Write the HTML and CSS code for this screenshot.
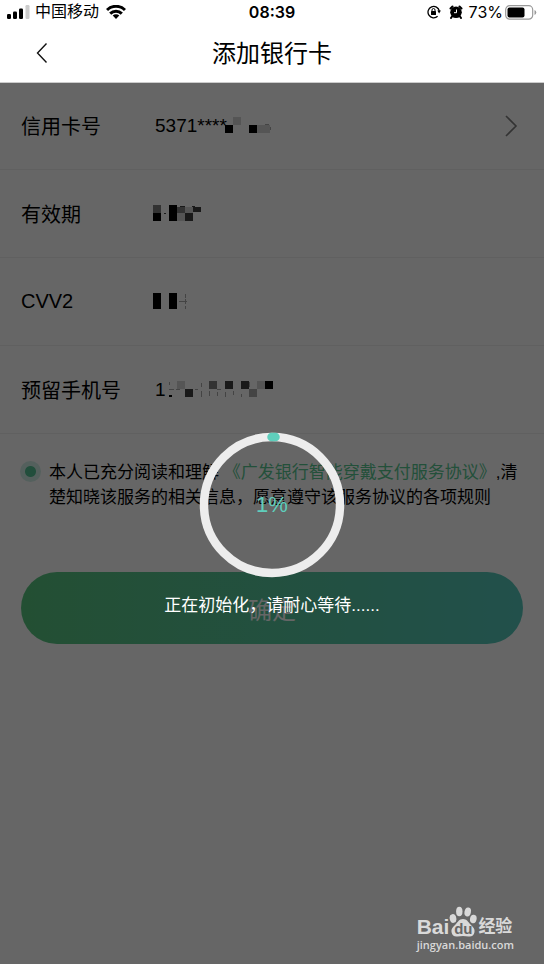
FILE: index.html
```html
<!DOCTYPE html>
<html lang="zh-CN">
<head>
<meta charset="utf-8">
<meta name="viewport" content="width=device-width, initial-scale=1">
<title>添加银行卡</title>
<link rel="stylesheet" href="styles.css">
</head>
<body>
<header class="top">
  <div class="status">
    <div class="status-side">
      <svg class="signal" width="23" height="14" viewBox="0 0 23 14" aria-hidden="true">
        <rect x="0" y="9" width="4" height="5" rx="1.2"/>
        <rect x="6" y="6.500" width="4" height="7.500" rx="1.2"/>
        <rect x="12" y="3.500" width="4" height="10.500" rx="1.2"/>
        <rect x="18.500" y="0" width="4" height="14" rx="1.2" fill="#ccc"/>
      </svg>
      <span class="carrier">中国移动</span>
      <svg width="20" height="14" viewBox="0 0 20 14" aria-hidden="true">
        <g fill="none" stroke="#000" stroke-width="3">
          <path d="M1 5a12.800 12.800 0 0 1 18 0"/>
          <path d="M4.200 8.600a8.200 8.200 0 0 1 11.600 0"/>
        </g>
        <path d="M10 13.900l-3.300-3.300a4.700 4.700 0 0 1 6.600 0z"/>
      </svg>
    </div>
    <time class="clock">08:39</time>
    <div class="status-side status-right">
      <svg width="14" height="14" viewBox="0 0 14 14" aria-hidden="true">
        <path d="M10.600 11.300A5.700 5.700 0 1 1 12.300 6" fill="none" stroke="#000" stroke-width="1.300"/>
        <path d="M10.300 5.500h3.600l-1.800 3z"/>
        <rect x="4" y="6" width="5" height="4" rx=".5"/>
        <path d="M5 6.200V5a1.500 1.500 0 0 1 3 0v1.200" fill="none" stroke="#000"/>
      </svg>
      <svg class="alarm" width="14" height="14" viewBox="0 0 14 14" aria-hidden="true">
        <circle cx="7" cy="7.300" r="5.800"/>
        <path d="M1.500 3.500L3.500 1.500M12.500 3.500L10.500 1.500M3 11.500l-1 1.500M11 11.500l1 1.500" stroke="#000" stroke-width="2" stroke-linecap="round"/>
        <path d="M7.500 4.500v3.200H5" fill="none" stroke="#fff"/>
      </svg>
      <span class="percent">73%</span>
      <svg width="32" height="15" viewBox="0 0 32 15" aria-hidden="true">
        <rect x=".7" y=".7" width="27" height="13.500" rx="4" fill="none" stroke="#999" stroke-width="1.200"/>
        <rect x="2.500" y="2.500" width="17" height="10" rx="2"/>
        <path d="M29.500 5v5q1.800-.8 1.800-2.500t-1.800-2.500z" fill="#999"/>
      </svg>
    </div>
  </div>
  <nav class="nav">
    <button class="back" type="button" aria-label="返回">
      <svg width="12" height="22" viewBox="0 0 12 22"><path d="M10.500 1.500L1.500 11l9 9.500" fill="none" stroke="#111" stroke-width="1.400"/></svg>
    </button>
    <h1 class="title">添加银行卡</h1>
  </nav>
</header>

<main class="main">
  <form class="form">
    <div class="row">
      <label for="card">信用卡号</label>
      <div class="field">
        <input id="card" type="text" value="5371****">
        <svg class="mosaic" width="140" height="32" viewBox="0 0 140 32" aria-hidden="true">
          <path class="m0" d="M75 15h8v8h-8zM99 15h8v8h-8z"/>
          <path class="m4" d="M83 7h8v8h-8zM107 15h13v8h-13z"/>
          <path class="m3" d="M115 14h4v1h-4zM120 17h1v3h-1z"/>
        </svg>
      </div>
      <svg class="arrow" width="14" height="24" viewBox="0 0 14 24" aria-hidden="true"><path d="M2 2l10 10L2 22" fill="none" stroke="#808080" stroke-width="1.600"/></svg>
    </div>
    <div class="row">
      <label for="expiry">有效期</label>
      <div class="field">
        <input id="expiry" type="text">
        <svg class="mosaic" width="140" height="32" viewBox="0 0 140 32" aria-hidden="true">
          <path class="m0" d="M3 15h8v8h-8zM19 7h8v16h-8z"/>
          <path class="m2" d="M3 7h8v8h-8zM27 9h8v6h-8z"/>
          <path class="m1" d="M35 15h8v8h-8zM43 9h8v5h-8z"/>
          <path class="m4" d="M35 9h8v6h-8zM27 15h8v8h-8z"/>
          <path class="m1" d="M30 8h5v1h-5zM42 8h3v1h-3zM14 15h2v1h-2z"/>
        </svg>
      </div>
    </div>
    <div class="row">
      <label for="cvv">CVV2</label>
      <div class="field">
        <input id="cvv" type="text">
        <svg class="mosaic" width="140" height="32" viewBox="0 0 140 32" aria-hidden="true">
          <path class="m0" d="M3 7h8v16h-8zM19 7h8v16h-8z"/>
          <path class="m3" d="M29 15h8v1h-8zM35 8h1v4h-1zM35 13h1v5h-1zM35 20h1v3h-1z"/>
        </svg>
      </div>
    </div>
    <div class="row">
      <label for="phone">预留手机号</label>
      <div class="field">
        <input id="phone" type="text" value="1">
        <svg class="mosaic" width="140" height="32" viewBox="0 0 140 32" aria-hidden="true">
          <path class="m0" d="M115 7h8v8h-8zM19 21h3v2h-3z"/>
          <path class="m1" d="M35 15h8v8h-8zM75 7h8v8h-8zM91 7h8v8h-8z"/>
          <path class="m2" d="M59 7h8v8h-8z"/>
          <path class="m3" d="M99 15h8v8h-8z"/>
          <path class="m4" d="M27 7h8v8h-8zM107 7h8v8h-8z"/>
          <path class="m3" d="M19 8h1v3h-1zM19 15h5v1h-5zM26 15h4v1h-4zM45 15h3v1h-3zM51 9h1v4h-1zM51 17h1v6h-1zM59 17h1v5h-1zM67 15h4v1h-4zM67 18h1v4h-1zM75 18h1v5h-1zM83 17h1v4h-1zM91 20h1v3h-1zM99 8h1v5h-1z"/>
        </svg>
      </div>
    </div>
    <div class="agreement">
      <input class="agree" id="agree" type="radio" checked>
      <label for="agree">本人已充分阅读和理解 <a href="#agreement">《广发银行智能穿戴支付服务协议》</a>,清楚知晓该服务的相关信息，愿意遵守该服务协议的各项规则</label>
    </div>
    <button class="submit" type="button">确定</button>
  </form>

  <div class="overlay" role="status">
    <div class="progress">
      <svg class="ring" viewBox="0 0 144 144" aria-hidden="true">
        <circle cx="72" cy="72" r="68" fill="none" stroke="#ededed" stroke-width="8.500"/>
        <path d="M71.500 4h4" stroke="#5fcebc" stroke-width="8.500" stroke-linecap="round"/>
      </svg>
      <span class="value">1%</span>
    </div>
    <p class="message">正在初始化，请耐心等待......</p>
  </div>

  <div class="watermark">
    <div class="brand">
      <span class="bai">Bai</span>
      <span class="paw">
        <svg width="28" height="31" viewBox="0 0 28 31" aria-hidden="true">
          <ellipse cx="4" cy="12.500" rx="3.300" ry="4.400" transform="rotate(-12 4 12.500)"/>
          <ellipse cx="10.300" cy="5.500" rx="3.200" ry="4.700"/>
          <ellipse cx="18.700" cy="6" rx="3.200" ry="4.500" transform="rotate(12 18.700 6)"/>
          <ellipse cx="24.300" cy="13" rx="3.300" ry="4.200" transform="rotate(10 24.300 13)"/>
          <path d="M14 13c4 0 5 3 7.500 5.500 3 2.700 4.500 4.500 4 7.500-.5 3.500-3 5-6 4.500-4-.7-7-.7-11 0-3 .5-5.500-1-6-4.500-.5-3 1-4.800 4-7.500C9 16 10 13 14 13z"/>
        </svg>
        <span class="du">du</span>
      </span>
      <span class="exp">经验</span>
    </div>
    <div class="site">jingyan.baidu.com</div>
  </div>
</main>
</body>
</html>
```
FILE: styles.css
```css
* {
  box-sizing: border-box;
}

body {
  margin: 0;
  min-height: 100vh;
  display: flex;
  flex-direction: column;
  background: #fff;
  color: #000;
  font-family: "Liberation Sans", "Noto Sans CJK SC", sans-serif;
}

button,
input {
  font: inherit;
  color: inherit;
}

.top {
  position: relative;
  z-index: 1;
  height: 82px;
  background: #fff;
  box-shadow: 0 1px 0 #ccc;
}

.status {
  display: grid;
  grid-template-columns: 1fr auto 1fr;
  align-items: center;
  height: 24px;
  padding: 0 7px;
}

.status-side {
  display: flex;
  align-items: center;
}

.status-right {
  justify-content: flex-end;
}

.carrier {
  margin: 0 7px 0 5px;
  font-size: 16px;
  line-height: 24px;
}

.clock {
  font: 600 16px/24px Inter, sans-serif;
}

.alarm {
  margin: 0 6px 0 8px;
}

.percent {
  margin-right: 2px;
  font: 16px/24px Inter, sans-serif;
}

.nav {
  display: grid;
  grid-template-columns: 48px 1fr 48px;
  align-items: center;
  height: 58px;
}

.back {
  display: flex;
  justify-content: flex-end;
  padding: 0;
  border: 0;
  background: none;
}

.title {
  margin: 0;
  padding-top: 2px;
  font-size: 24px;
  font-weight: 400;
  line-height: 36px;
  text-align: center;
}

.main {
  position: relative;
  flex: 1;
}

.row {
  display: grid;
  grid-template-columns: 134px 1fr auto;
  align-items: center;
  height: 88px;
  padding: 0 26px 0 21px;
  border-bottom: 1px solid #efefef;
  font-size: 20px;
}

.field {
  position: relative;
  display: flex;
}

.field input {
  width: 100%;
  padding: 0;
  border: 0;
  background: none;
  font-size: 19px;
  line-height: 32px;
}

.mosaic {
  position: absolute;
  top: 0;
  left: -5px;
}

.m0 { fill: #000; }
.m1 { fill: #404040; }
.m2 { fill: #808080; }
.m3 { fill: #aaa; }
.m4 { fill: #d4d4d4; }

.agreement {
  display: flex;
  align-items: flex-start;
  gap: 8px;
  padding: 26px 20px 0;
  font-size: 17px;
  line-height: 25px;
}

.agreement a {
  color: #58c891;
  text-decoration: none;
}

.agree {
  appearance: none;
  flex: none;
  width: 21px;
  height: 21px;
  margin: 1px 0 0;
  border-radius: 50%;
  background: radial-gradient(circle, #56c496 0 5px, #d2f0e8 6px);
}

.submit {
  display: block;
  width: calc(100% - 42px);
  height: 72px;
  margin: 62px 21px 0;
  border: 0;
  border-radius: 36px;
  background: linear-gradient(90deg, #58c680, #55c8bc);
  color: #fff;
  font-size: 24px;
}

.overlay {
  position: absolute;
  inset: 0;
  display: flex;
  flex-direction: column;
  align-items: center;
  justify-content: center;
  gap: 17px;
  padding-top: 5px;
  background: rgba(0, 0, 0, 0.6);
}

.progress {
  display: grid;
  place-items: center;
}

.ring,
.value {
  grid-area: 1 / 1;
}

.ring {
  width: 144px;
  height: 144px;
  overflow: visible;
}

.value {
  color: #5fcebc;
  font-size: 22px;
}

.message {
  margin: 0;
  color: #fff;
  font-size: 17px;
  line-height: 24px;
}

.watermark {
  position: absolute;
  right: 30px;
  bottom: 11px;
  color: #d9d9d9;
  fill: #d9d9d9;
}

.brand {
  display: flex;
  align-items: flex-end;
  height: 32px;
}

.bai {
  font: 700 21px/20px "Liberation Sans", sans-serif;
}

.paw {
  display: grid;
  place-items: end center;
}

.paw svg,
.du {
  grid-area: 1 / 1;
}

.du {
  color: #666;
  font: 700 15px/17px "Liberation Sans", sans-serif;
}

.exp {
  margin-left: 1px;
  font-size: 17px;
  font-weight: 700;
  line-height: 20px;
}

.site {
  font: 600 11px/16px "Open Sans", sans-serif;
}
```
